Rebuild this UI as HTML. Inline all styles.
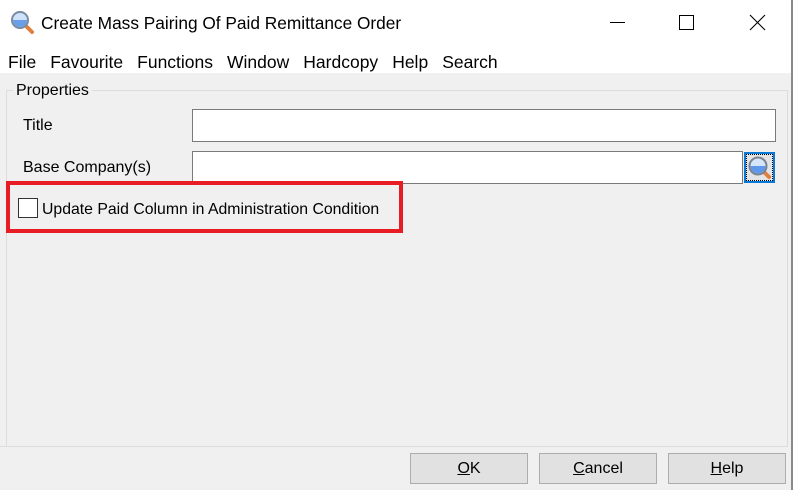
<!DOCTYPE html><html><head><style>
body{margin:0;width:793px;height:490px;overflow:hidden;background:#fff;font-family:"Liberation Sans",sans-serif;position:relative}
.a{position:absolute}
.m span{margin-right:14px}
</style></head><body>
<div class="a" style="left:0;top:0;width:791px;height:490px;border-right:2px solid #8a8a8a;box-sizing:content-box"></div>
<svg class="a" style="left:10px;top:10px" width="24" height="24" viewBox="0 0 24 24"><line x1="15" y1="15" x2="22" y2="22" stroke="#e08040" stroke-width="4" stroke-linecap="round"/><circle cx="10" cy="10" r="8" fill="#cfe2fb" stroke="#7a8aa0" stroke-width="2"/><path d="M3 10a7 7 0 0 0 14 0z" fill="#6b9ee8"/></svg>
<div class="a" style="left:41px;top:13px;font-size:17.3px;color:#000">Create Mass Pairing Of Paid Remittance Order</div>
<div class="a" style="left:610px;top:22px;width:15px;height:1px;background:#000"></div>
<div class="a" style="left:679px;top:15px;width:13px;height:13px;border:1px solid #000"></div>
<svg class="a" style="left:749px;top:14px" width="17" height="17"><path d="M1 1L16 16M16 1L1 16" stroke="#000" stroke-width="1.1"/></svg>
<div class="a m" style="left:8px;top:52px;font-size:17.5px;white-space:nowrap"><span>File</span><span>Favourite</span><span>Functions</span><span>Window</span><span>Hardcopy</span><span>Help</span><span>Search</span></div>
<div class="a" style="left:0;top:73px;width:791px;height:417px;background:#f0f0f0"></div>
<div class="a" style="left:6px;top:90px;width:780px;height:355px;border:1px solid #dcdcdc"></div>
<div class="a" style="left:13px;top:82px;padding:0 3px;background:#f0f0f0;font-size:16px">Properties</div>
<div class="a" style="left:23px;top:117px;font-size:16px">Title</div>
<div class="a" style="left:192px;top:109px;width:582px;height:31px;background:#fff;border:1px solid #7a7a7a"></div>
<div class="a" style="left:23px;top:159px;font-size:16px">Base Company(s)</div>
<div class="a" style="left:192px;top:151px;width:549px;height:31px;background:#fff;border:1px solid #7a7a7a"></div>
<div class="a" style="left:744px;top:152px;width:27px;height:27px;border:2px solid #0a78d7;background:#e4e4e4;outline:1px dotted #000;outline-offset:-3px"></div>
<svg class="a" style="left:746px;top:154px" width="27" height="27" viewBox="0 0 27 27"><line x1="17" y1="17" x2="23" y2="23" stroke="#e08040" stroke-width="4" stroke-linecap="round"/><circle cx="12" cy="12" r="8.5" fill="#d5e6fb" stroke="#7c8290" stroke-width="2"/><path d="M4.5 12a7.5 7.5 0 0 0 15 0z" fill="#5e98ea"/></svg>
<div class="a" style="left:6px;top:181px;width:389px;height:44px;border:4px solid #e81c24"></div>
<div class="a" style="left:18px;top:198px;width:18px;height:18px;background:#fff;border:1px solid #333"></div>
<div class="a" style="left:42px;top:201px;font-size:15.8px">Update Paid Column in Administration Condition</div>
<div class="a" style="left:0;top:446px;width:787px;height:1px;background:#dcdcdc"></div>
<div class="a" style="left:410px;top:453px;width:116px;height:29px;border:1px solid #adadad;background:#e1e1e1;text-align:center;line-height:30px;font-size:16px"><u>O</u>K</div>
<div class="a" style="left:539px;top:453px;width:116px;height:29px;border:1px solid #adadad;background:#e1e1e1;text-align:center;line-height:30px;font-size:16px"><u>C</u>ancel</div>
<div class="a" style="left:668px;top:453px;width:116px;height:29px;border:1px solid #adadad;background:#e1e1e1;text-align:center;line-height:30px;font-size:16px"><u>H</u>elp</div>
</body></html>
